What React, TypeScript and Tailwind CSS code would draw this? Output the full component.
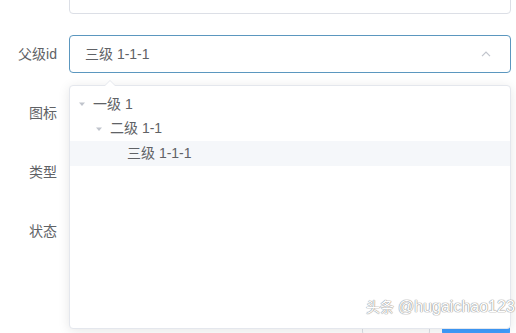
import React from "react";

const Caret = () => (
  <svg width="8" height="8" viewBox="0 0 8 8" className="block">
    <path d="M1 2.5 L7 2.5 L4 6 Z" fill="#c0c4cc" />
  </svg>
);

const Row = ({ label, children }: { label: string; children?: React.ReactNode }) => (
  <div className="flex h-[38px] mb-[21px]">
    <div className="w-[69px] shrink-0 pr-[12px] text-right text-[14px] leading-[38px] text-[#606266]">{label}</div>
    <div className="w-[442px]">{children}</div>
  </div>
);

export default function App() {
  return (
    <div
      className="relative w-[516px] h-[333px] overflow-hidden bg-white"
      style={{ fontFamily: '"Liberation Sans", "Noto Sans CJK SC", sans-serif' }}
    >
      <div className="mt-[-24px]">
        <Row label="">
          <div className="h-[38px] rounded-[4px] border border-[#dcdfe6] bg-white" />
        </Row>
        <Row label="父级id">
          <div className="flex h-[38px] items-center justify-between rounded-[4px] border border-[#5b97bf] bg-white pl-[15px] pr-[19px]">
            <span className="text-[14px] text-[#606266]">三级 1-1-1</span>
            <svg width="10" height="6" viewBox="0 0 10 6">
              <path d="M1 5.2 L5 1.2 L9 5.2" fill="none" stroke="#c0c4cc" strokeWidth="1.2" />
            </svg>
          </div>
        </Row>
        <Row label="图标" />
        <Row label="类型" />
        <Row label="状态" />
        <div className="mt-[46px] flex justify-end gap-[12px] pr-[6px]">
          <button className="h-[40px] w-[68px] rounded-[4px] border border-[#dcdfe6] bg-white text-[14px] text-[#606266]">取消</button>
          <button className="h-[40px] w-[68px] rounded-[4px] border border-[#409eff] bg-[#409eff] text-[14px] text-white">确定</button>
        </div>
      </div>

      {/* dropdown */}
      <div className="absolute left-[69px] top-[85px] h-[244px] w-[442px] rounded-[4px] border border-[#e4e7ed] bg-white shadow-[0_2px_12px_0_rgba(0,0,0,0.1)]">
        <div className="absolute left-[34px] top-[-6px] h-0 w-0 border-x-[6px] border-b-[6px] border-x-transparent border-b-[#e4e7ed]" />
        <div className="absolute left-[35px] top-[-5px] h-0 w-0 border-x-[5px] border-b-[5px] border-x-transparent border-b-white" />
        <div className="pt-[6px] text-[14px] text-[#606266]">
          <div className="flex h-[24.5px] items-center">
            <span className="flex w-[23px] justify-center"><Caret /></span>
            <span>一级 1</span>
          </div>
          <div className="flex h-[24.5px] items-center pl-[17px]">
            <span className="flex w-[23px] justify-center"><Caret /></span>
            <span>二级 1-1</span>
          </div>
          <div className="flex h-[24.5px] items-center bg-[#f5f7fa] pl-[34px]">
            <span className="w-[23px]" />
            <span>三级 1-1-1</span>
          </div>
        </div>
      </div>

      {/* watermark */}
      <div
        className="absolute left-[366px] top-[295px] flex items-center gap-[4px] text-[16px] text-white"
        style={{ textShadow: "0 0 1px #999, 0 0 1px #999, 0 0 1px #999" }}
      >
        <span className="text-[14px]">头条</span>
        <span>@hugaichao123</span>
      </div>
    </div>
  );
}
